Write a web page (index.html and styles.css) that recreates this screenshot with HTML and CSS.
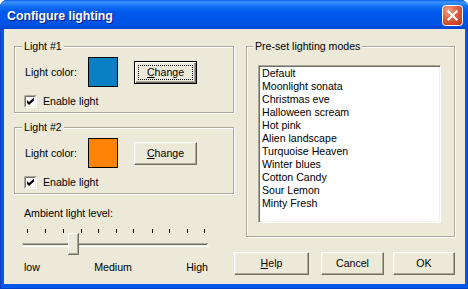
FILE: index.html
```html
<!DOCTYPE html>
<html>
<head>
<meta charset="utf-8">
<link rel="stylesheet" href="styles.css">
</head>
<body>
<div class="window">
  <div class="titlebar">
    <span class="title">Configure lighting</span>
    <span class="close">
      <svg width="21" height="21" viewBox="0 0 21 21">
        <defs>
          <radialGradient id="cg" cx="30%" cy="25%" r="85%">
            <stop offset="0" stop-color="#F2A287"/>
            <stop offset="0.5" stop-color="#E2603F"/>
            <stop offset="1" stop-color="#C3401F"/>
          </radialGradient>
        </defs>
        <rect x="0.5" y="0.5" width="20" height="20" rx="3" fill="url(#cg)" stroke="#fff"/>
        <path d="M6.5 6.5 L14.5 14.5 M14.5 6.5 L6.5 14.5" stroke="#fff" stroke-width="2.2" stroke-linecap="square"/>
      </svg>
    </span>
  </div>
  <div class="client">
    <div class="left">
      <fieldset class="group light">
        <legend>Light #1</legend>
        <div class="color-row">
          <span class="color-label">Light color:</span>
          <span class="swatch swatch-blue"></span>
          <button class="btn change default"><span class="focus"><u>C</u>hange</span></button>
        </div>
        <label class="check-row">
          <svg class="checkbox" width="13" height="13" viewBox="0 0 13 13">
            <rect width="13" height="13" fill="#fff"/>
            <path d="M0.5 12.5 V0.5 H12.5" stroke="#ACA899" fill="none"/>
            <path d="M1.5 11.5 V1.5 H11.5" stroke="#716F64" fill="none"/>
            <path d="M1.5 11.5 H11.5 V1.5" stroke="#F1EFE2" fill="none"/>
            <path d="M3 5 L5 7 L10 2.5 V5.5 L5 10 L3 8 Z" fill="#000"/>
          </svg>
          <span>Enable light</span>
        </label>
      </fieldset>
      <fieldset class="group light second">
        <legend>Light #2</legend>
        <div class="color-row">
          <span class="color-label">Light color:</span>
          <span class="swatch swatch-orange"></span>
          <button class="btn change"><span><u>C</u>hange</span></button>
        </div>
        <label class="check-row">
          <svg class="checkbox" width="13" height="13" viewBox="0 0 13 13">
            <rect width="13" height="13" fill="#fff"/>
            <path d="M0.5 12.5 V0.5 H12.5" stroke="#ACA899" fill="none"/>
            <path d="M1.5 11.5 V1.5 H11.5" stroke="#716F64" fill="none"/>
            <path d="M1.5 11.5 H11.5 V1.5" stroke="#F1EFE2" fill="none"/>
            <path d="M3 5 L5 7 L10 2.5 V5.5 L5 10 L3 8 Z" fill="#000"/>
          </svg>
          <span>Enable light</span>
        </label>
      </fieldset>
      <div class="ambient-label">Ambient light level:</div>
      <svg class="slider" width="200" height="28" viewBox="0 0 200 28">
        <g fill="#000">
          <rect x="13" y="1" width="1" height="4"/>
          <rect x="31" y="1" width="1" height="4"/>
          <rect x="49" y="1" width="1" height="4"/>
          <rect x="67" y="1" width="1" height="4"/>
          <rect x="84" y="1" width="1" height="4"/>
          <rect x="102" y="1" width="1" height="4"/>
          <rect x="119" y="1" width="1" height="4"/>
          <rect x="138" y="1" width="1" height="4"/>
          <rect x="155" y="1" width="1" height="4"/>
          <rect x="173" y="1" width="1" height="4"/>
          <rect x="190" y="1" width="1" height="4"/>
        </g>
        <rect x="8" y="15" width="186" height="1" fill="#ACA899"/>
        <rect x="9" y="16" width="184" height="1" fill="#716F64"/>
        <rect x="9" y="17" width="185" height="1" fill="#F1EFE2"/>
        <rect x="8" y="18" width="187" height="1" fill="#fff"/>
        <rect x="54" y="5" width="11" height="22" fill="#ECE9D8"/>
        <path d="M54.5 26 V5.5 H64" stroke="#fff" fill="none"/>
        <path d="M55 25.5 H63.5 V6" stroke="#ACA899" fill="none"/>
        <path d="M54 26.5 H64.5 V5" stroke="#716F64" fill="none"/>
      </svg>
      <div class="slider-labels"><span>low</span><span>Medium</span><span>High</span></div>
    </div>
    <div class="right">
      <fieldset class="group presets">
        <legend>Pre-set lighting modes</legend>
        <ul class="listbox">
          <li>Default</li>
          <li>Moonlight sonata</li>
          <li>Christmas eve</li>
          <li>Halloween scream</li>
          <li>Hot pink</li>
          <li>Alien landscape</li>
          <li>Turquoise Heaven</li>
          <li>Winter blues</li>
          <li>Cotton Candy</li>
          <li>Sour Lemon</li>
          <li>Minty Fresh</li>
        </ul>
      </fieldset>
      <div class="buttons">
        <button class="btn help"><span><u>H</u>elp</span></button>
        <button class="btn cancel"><span>Cancel</span></button>
        <button class="btn ok"><span>OK</span></button>
      </div>
    </div>
  </div>
</div>
</body>
</html>
```
FILE: styles.css
```css
html, body {
  margin: 0;
  padding: 0;
  background: #ffffff;
}

body {
  font-family: "Liberation Sans", Arial, sans-serif;
  font-size: 10.6px;
  color: #000;
}

.window {
  width: 468px;
  height: 289px;
  display: flex;
  flex-direction: column;
  background: #0058E8;
  border-radius: 7px 7px 0 0;
  overflow: hidden;
  box-shadow: inset 0 0 0 1px #0841C9;
}

.titlebar {
  flex: none;
  height: 29px;
  display: flex;
  justify-content: space-between;
  align-items: flex-start;
  padding: 0 5px 0 7px;
  background: linear-gradient(180deg, #0A5CEC 0px, #3D95FF 2px, #2A85FA 4px, #0E6CF3 7px, #0058EE 12px, #0055E7 20px, #0052E0 25px, #0042D2 29px);
  border-radius: 7px 7px 0 0;
}

.title {
  margin-top: 9px;
  line-height: 14px;
  font-size: 12.3px;
  font-weight: bold;
  color: #fff;
  text-shadow: 1px 1px 0 #0A1883;
}

.close {
  margin-top: 5px;
  width: 21px;
  height: 21px;
  display: block;
}

.close svg {
  display: block;
}

.client {
  flex: 1;
  margin: 0 3px 5px 4px;
  background: #ECE9D8;
  display: flex;
  padding: 11px 10px 0 10px;
}

.left {
  width: 220px;
  display: flex;
  flex-direction: column;
}

.right {
  width: 221px;
  display: flex;
  flex-direction: column;
}

.group {
  margin: 0;
  min-width: 0;
  box-sizing: border-box;
  border: 1px solid #ACA899;
  box-shadow: inset 1px 1px 0 #fff, 1px 1px 0 #fff;
}

.group legend {
  padding: 0 2px;
  line-height: 13px;
  background: #ECE9D8;
}

.light {
  width: 220px;
  padding: 4px 0 4px 10px;
}

.light legend {
  margin-left: -3px;
}

.second {
  margin-top: 8px;
}

.color-row {
  display: flex;
  align-items: center;
  height: 30px;
}

.color-label {
  width: 63px;
  line-height: 13px;
}

.swatch {
  width: 28px;
  height: 28px;
  border: 1px solid #000;
}

.swatch-blue {
  background: #0A80C4;
}

.swatch-orange {
  background: #FF8306;
}

.btn {
  box-sizing: border-box;
  height: 23px;
  margin: 0;
  padding: 0;
  font: inherit;
  color: #000;
  background: #ECE9D8;
  border: 1px solid;
  border-color: #fff #716F64 #716F64 #fff;
  box-shadow: inset -1px -1px 0 #ACA899, inset 1px 1px 0 #F1EFE2;
  display: flex;
  align-items: center;
  justify-content: center;
  line-height: 13px;
}

.btn u {
  text-decoration: underline;
}

.change {
  width: 63px;
  margin-left: 16px;
}

.btn.default {
  border-color: #000;
  box-shadow: inset 1px 1px 0 #fff, inset -1px -1px 0 #716F64, inset -2px -2px 0 #ACA899;
  padding: 3px;
}

.focus {
  flex: 1;
  align-self: stretch;
  display: flex;
  align-items: center;
  justify-content: center;
  border: 1px dotted #000;
}

.check-row {
  display: flex;
  align-items: center;
  height: 13px;
  margin-top: 8px;
  line-height: 13px;
}

.checkbox {
  display: block;
  margin-left: -1px;
  margin-right: 6px;
}

.ambient-label {
  margin-top: 13px;
  padding-left: 10px;
  line-height: 13px;
}

.slider {
  display: block;
  margin-top: 8px;
}

.slider-labels {
  display: flex;
  justify-content: space-between;
  width: 184px;
  margin-left: 10px;
  margin-top: 5px;
  line-height: 13px;
}

.presets {
  width: 209px;
  margin-left: 12px;
  padding: 12px 0 13px 11px;
}

.presets legend {
  margin-left: -5px;
}

.listbox {
  box-sizing: border-box;
  width: 183px;
  height: 158px;
  margin: 0;
  padding: 1px 3px;
  list-style: none;
  background: #fff;
  border: 1px solid;
  border-color: #ACA899 #fff #fff #ACA899;
  box-shadow: inset 1px 1px 0 #716F64, inset -1px -1px 0 #F1EFE2;
}

.listbox li {
  line-height: 13px;
  white-space: nowrap;
}

.buttons {
  display: flex;
  justify-content: flex-end;
  margin-top: 15px;
}

.help {
  width: 75px;
}

.cancel {
  width: 63px;
  margin-left: 12px;
}

.ok {
  width: 62px;
  margin-left: 9px;
}
```
